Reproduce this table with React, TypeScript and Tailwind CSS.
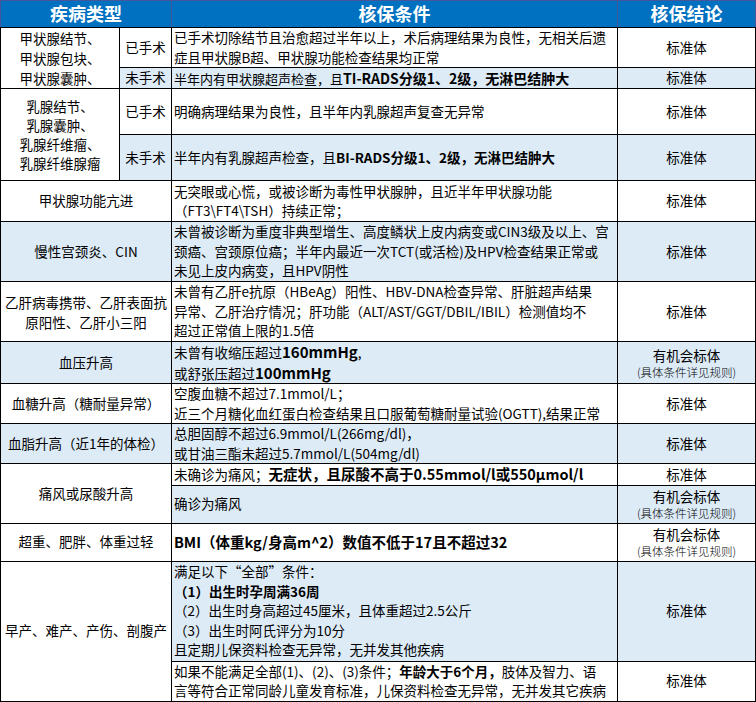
import React from "react";

const td = "border border-black p-0 align-middle";
const blue = "bg-[#ddebf7]";
const left = "px-[2px] text-left";

const Lines = ({ lines }: { lines: React.ReactNode[] }) => (
  <>
    {lines.map((l, i) => (
      <div key={i} className="whitespace-nowrap">
        {l}
      </div>
    ))}
  </>
);

const Chance = () => (
  <div className="text-center">
    <div className="leading-[18px]">有机会标体</div>
    <div className="text-[11.5px] leading-[16px] font-light">(具体条件详见规则)</div>
  </div>
);

const B = ({ children, size = "" }: { children: React.ReactNode; size?: string }) => (
  <b className={`font-bold ${size}`}>{children}</b>
);

export default function App() {
  return (
    <div className="bg-white w-[756px] h-[702px] font-['Noto_Sans_CJK_SC',sans-serif] text-[13.5px] leading-[19.5px] text-black">
      <table className="table-fixed border-collapse w-[755px]">
        <colgroup>
          <col className="w-[119px]" />
          <col className="w-[52px]" />
          <col className="w-[446px]" />
          <col className="w-[138px]" />
        </colgroup>
        <tbody>
          <tr className="h-[27px] bg-[#0070c0] text-white text-[18px] font-bold">
            <th colSpan={2} className="border border-[#45579a] border-b-black p-0 text-center">
              疾病类型
            </th>
            <th className="border border-[#45579a] border-b-black p-0 text-center">核保条件</th>
            <th className="border border-[#45579a] border-b-black p-0 text-center">核保结论</th>
          </tr>

          {/* 甲状腺 */}
          <tr className="h-[40px]">
            <td rowSpan={2} className={`${td} text-center leading-[20px]`}>
              <div>甲状腺结节、</div>
              <div>甲状腺包块、</div>
              <div>甲状腺囊肿、</div>
            </td>
            <td className={`${td} text-center`}>已手术</td>
            <td className={`${td} ${left}`}>
              <Lines
                lines={[
                  "已手术切除结节且治愈超过半年以上，术后病理结果为良性，无相关后遗",
                  "症且甲状腺B超、甲状腺功能检查结果均正常",
                ]}
              />
            </td>
            <td className={`${td} text-center`}>标准体</td>
          </tr>
          <tr className={`h-[21px] ${blue}`}>
            <td className={`${td} text-center`}>未手术</td>
            <td className={`${td} ${left} text-[13px] leading-[19px]`}>
              <Lines
                lines={[
                  <>
                    半年内有甲状腺超声检查，且<B size="text-[14px]">TI-RADS分级1、2级，无淋巴结肿大</B>
                  </>,
                ]}
              />
            </td>
            <td className={`${td} text-center`}>标准体</td>
          </tr>

          {/* 乳腺 */}
          <tr className="h-[46px]">
            <td rowSpan={2} className={`${td} bg-white text-center leading-[19px]`}>
              <div>乳腺结节、</div>
              <div>乳腺囊肿、</div>
              <div>乳腺纤维瘤、</div>
              <div>乳腺纤维腺瘤</div>
            </td>
            <td className={`${td} text-center`}>已手术</td>
            <td className={`${td} ${left}`}>明确病理结果为良性，且半年内乳腺超声复查无异常</td>
            <td className={`${td} text-center`}>标准体</td>
          </tr>
          <tr className={`h-[46px] ${blue}`}>
            <td className={`${td} text-center`}>未手术</td>
            <td className={`${td} ${left}`}>
              半年内有乳腺超声检查，且<B>BI-RADS分级1、2级，无淋巴结肿大</B>
            </td>
            <td className={`${td} text-center`}>标准体</td>
          </tr>

          {/* 甲亢 */}
          <tr className="h-[41px]">
            <td colSpan={2} className={`${td} text-center`}>甲状腺功能亢进</td>
            <td className={`${td} ${left}`}>
              <Lines
                lines={[
                  "无突眼或心慌，或被诊断为毒性甲状腺肿，且近半年甲状腺功能",
                  "（FT3\\FT4\\TSH）持续正常；",
                ]}
              />
            </td>
            <td className={`${td} text-center`}>标准体</td>
          </tr>

          <tr className={`h-[60px] ${blue}`}>
            <td colSpan={2} className={`${td} text-center`}>慢性宫颈炎、CIN</td>
            <td className={`${td} ${left}`}>
              <Lines
                lines={[
                  "未曾被诊断为重度非典型增生、高度鳞状上皮内病变或CIN3级及以上、宫",
                  "颈癌、宫颈原位癌；半年内最近一次TCT(或活检)及HPV检查结果正常或",
                  "未见上皮内病变，且HPV阴性",
                ]}
              />
            </td>
            <td className={`${td} text-center`}>标准体</td>
          </tr>

          <tr className="h-[60px]">
            <td colSpan={2} className={`${td} text-center leading-[20px]`}>
              <div>乙肝病毒携带、乙肝表面抗</div>
              <div>原阳性、乙肝小三阳</div>
            </td>
            <td className={`${td} ${left}`}>
              <Lines
                lines={[
                  "未曾有乙肝e抗原（HBeAg）阳性、HBV-DNA检查异常、肝脏超声结果",
                  "异常、乙肝治疗情况；肝功能（ALT/AST/GGT/DBIL/IBIL）检测值均不",
                  "超过正常值上限的1.5倍",
                ]}
              />
            </td>
            <td className={`${td} text-center`}>标准体</td>
          </tr>

          <tr className={`h-[41px] ${blue}`}>
            <td colSpan={2} className={`${td} text-center`}>血压升高</td>
            <td className={`${td} ${left}`}>
              <Lines
                lines={[
                  <>
                    未曾有收缩压超过<B size="text-[15px]">160mmHg</B>,
                  </>,
                  <>
                    或舒张压超过<B size="text-[15px]">100mmHg</B>
                  </>,
                ]}
              />
            </td>
            <td className={`${td}`}>
              <Chance />
            </td>
          </tr>

          <tr className="h-[40px]">
            <td colSpan={2} className={`${td} text-center`}>血糖升高（糖耐量异常）</td>
            <td className={`${td} ${left}`}>
              <Lines
                lines={[
                  "空腹血糖不超过7.1mmol/L；",
                  "近三个月糖化血红蛋白检查结果且口服葡萄糖耐量试验(OGTT),结果正常",
                ]}
              />
            </td>
            <td className={`${td} text-center`}>标准体</td>
          </tr>

          <tr className={`h-[40px] ${blue}`}>
            <td colSpan={2} className={`${td} text-center`}>血脂升高（近1年的体检）</td>
            <td className={`${td} ${left}`}>
              <Lines
                lines={["总胆固醇不超过6.9mmol/L(266mg/dl)，", "或甘油三酯未超过5.7mmol/L(504mg/dl)"]}
              />
            </td>
            <td className={`${td} text-center`}>标准体</td>
          </tr>

          {/* 痛风 */}
          <tr className="h-[21px]">
            <td colSpan={2} rowSpan={2} className={`${td} bg-white text-center`}>
              痛风或尿酸升高
            </td>
            <td className={`${td} ${left} whitespace-nowrap`}>
              未确诊为痛风；<B size="text-[14.5px]">无症状，且尿酸不高于0.55mmol/l或550μmol/l</B>
            </td>
            <td className={`${td} text-center`}>标准体</td>
          </tr>
          <tr className={`h-[38px] ${blue}`}>
            <td className={`${td} ${left}`}>确诊为痛风</td>
            <td className={`${td}`}>
              <Chance />
            </td>
          </tr>

          <tr className="h-[38px]">
            <td colSpan={2} className={`${td} text-center`}>超重、肥胖、体重过轻</td>
            <td className={`${td} ${left} whitespace-nowrap`}>
              <B size="text-[14.5px]">BMI（体重kg/身高m^2）数值不低于17且不超过32</B>
            </td>
            <td className={`${td}`}>
              <Chance />
            </td>
          </tr>

          {/* 早产 */}
          <tr className={`h-[100px] ${blue}`}>
            <td colSpan={2} rowSpan={2} className={`${td} bg-white text-center`}>
              早产、难产、产伤、剖腹产
            </td>
            <td className={`${td} ${left} leading-[19.4px]`}>
              <Lines
                lines={[
                  "满足以下“全部”条件：",
                  <B>（1）出生时孕周满36周</B>,
                  "（2）出生时身高超过45厘米，且体重超过2.5公斤",
                  "（3）出生时阿氏评分为10分",
                  "且定期儿保资料检查无异常，无并发其他疾病",
                ]}
              />
            </td>
            <td className={`${td} text-center`}>标准体</td>
          </tr>
          <tr className="h-[40px]">
            <td className={`${td} ${left}`}>
              <Lines
                lines={[
                  <>
                    如果不能满足全部(1)、(2)、(3)条件；<B>年龄大于6个月，</B>肢体及智力、语
                  </>,
                  "言等符合正常同龄儿童发育标准，儿保资料检查无异常，无并发其它疾病",
                ]}
              />
            </td>
            <td className={`${td} text-center`}>标准体</td>
          </tr>
        </tbody>
      </table>
    </div>
  );
}
